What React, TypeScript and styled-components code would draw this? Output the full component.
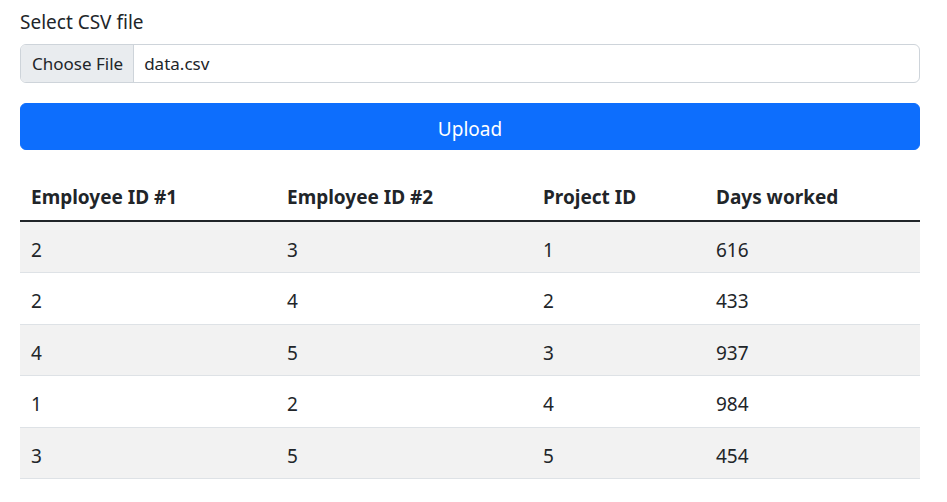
import styled, { createGlobalStyle } from 'styled-components';

// Employee pair report: CSV upload form above a striped results table.
const rows = [
  { a: 2, b: 3, project: 1, days: 616 },
  { a: 2, b: 4, project: 2, days: 433 },
  { a: 4, b: 5, project: 3, days: 937 },
  { a: 1, b: 2, project: 4, days: 984 },
  { a: 3, b: 5, project: 5, days: 454 },
];

const GlobalStyle = createGlobalStyle`
  * { box-sizing: border-box; }
  body {
    margin: 0;
    background: #fff;
    color: #212529;
    font-family: "Noto Sans", "Open Sans", sans-serif;
    font-size: 19px;
    line-height: 1.5;
  }
`;

const Page = styled.main`
  padding: 8px 27px 0 20px;
  max-width: 947px;
`;

const Form = styled.form`
  display: flex;
  flex-direction: column;
`;

const Label = styled.label`
  display: block;
  margin-bottom: 8px;
  line-height: 28px;
`;

// File input: grey "Choose File" part joined to the file name, one bordered box.
const FileField = styled.div`
  display: flex;
  align-items: stretch;
  height: 39px;
  border: 1px solid #ced4da;
  border-radius: 6px;
  overflow: hidden;
  background: #fff;
  font-size: 17px;
`;

const FileButton = styled.span`
  display: flex;
  align-items: center;
  padding: 0 10px 0 11px;
  background: #e9ecef;
  border-right: 1px solid #ced4da;
  color: #212529;
`;

const FileName = styled.span`
  display: flex;
  align-items: center;
  padding-left: 10px;
`;

const UploadButton = styled.button`
  margin-top: 20px;
  height: 47px;
  padding: 4px 0 0;
  border: 1px solid #0d6efd;
  border-radius: 6px;
  background: #0d6efd;
  color: #fff;
  font-family: inherit;
  font-size: 19px;
  cursor: pointer;
`;

const Table = styled.table`
  width: 100%;
  margin-top: 19px;
  border-collapse: collapse;
  table-layout: fixed;
`;

const Col = styled.col<{ $w?: number }>`
  width: ${({ $w }) => ($w ? `${$w}px` : 'auto')};
`;

const Th = styled.th`
  padding: 14px 11px 8px;
  text-align: left;
  font-weight: 700;
  border-bottom: 2px solid #212529;
`;

const Row = styled.tr<{ $striped: boolean }>`
  background: ${({ $striped }) => ($striped ? '#f2f2f2' : '#fff')};
`;

const Td = styled.td`
  padding: 14px 11px 8px;
  border-bottom: 1px solid #dee2e6;
`;

export default function App() {
  return (
    <Page>
      <GlobalStyle />
      <Form onSubmit={(e) => e.preventDefault()}>
        <Label>Select CSV file</Label>
        <FileField>
          <FileButton>Choose File</FileButton>
          <FileName>data.csv</FileName>
        </FileField>
        <UploadButton type="submit">Upload</UploadButton>
      </Form>

      <Table>
        <colgroup>
          <Col $w={256} />
          <Col $w={256} />
          <Col $w={173} />
          <Col />
        </colgroup>
        <thead>
          <tr>
            <Th>Employee ID #1</Th>
            <Th>Employee ID #2</Th>
            <Th>Project ID</Th>
            <Th>Days worked</Th>
          </tr>
        </thead>
        <tbody>
          {rows.map((r, i) => (
            <Row key={i} $striped={i % 2 === 0}>
              <Td>{r.a}</Td>
              <Td>{r.b}</Td>
              <Td>{r.project}</Td>
              <Td>{r.days}</Td>
            </Row>
          ))}
        </tbody>
      </Table>
    </Page>
  );
}
